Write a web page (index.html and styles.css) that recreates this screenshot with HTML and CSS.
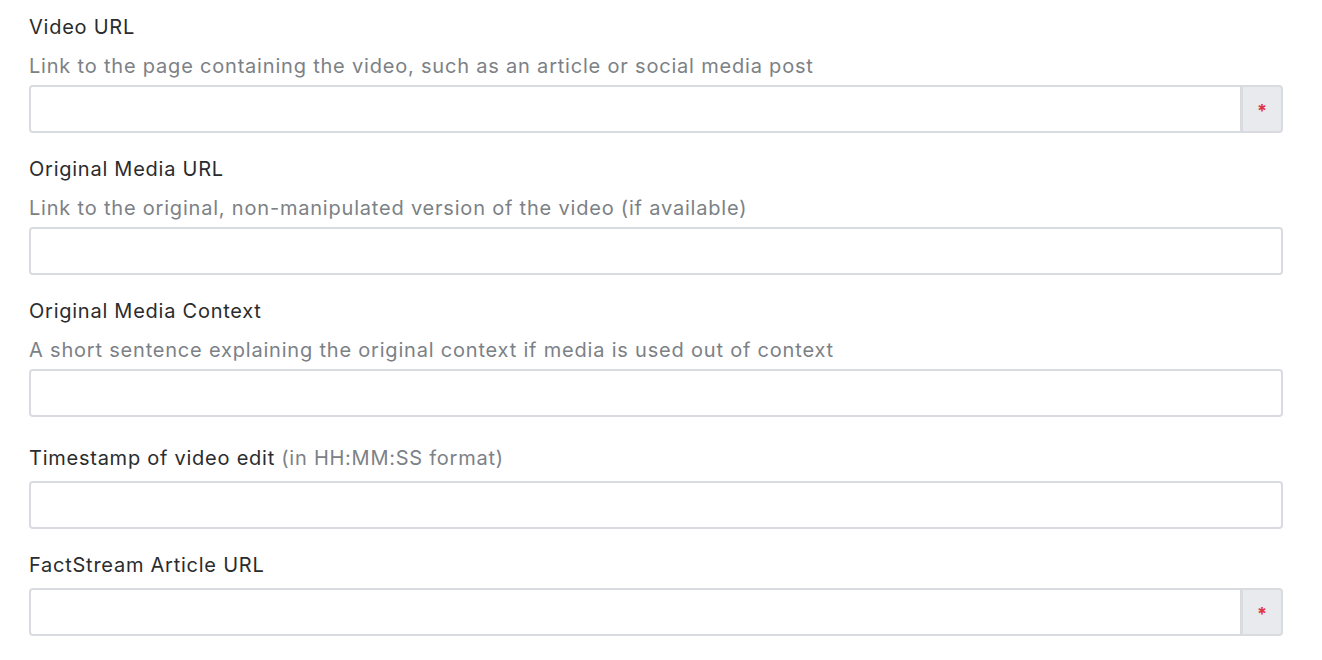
FILE: index.html
```html
<!DOCTYPE html>
<html lang="en">
<head>
    <meta charset="UTF-8">
    <meta name="viewport" content="width=device-width, initial-scale=1.0">
    <title>Video Submission</title>
    <link rel="stylesheet" href="styles.css">
</head>
<body>
    <form class="video-form">
        <div class="field">
            <label for="video-url">Video URL</label>
            <p class="help">Link to the page containing the video, such as an article or social media post</p>
            <div class="input-group">
                <input type="text" id="video-url">
                <span class="addon">*</span>
            </div>
        </div>
        <div class="field">
            <label for="original-url">Original Media URL</label>
            <p class="help">Link to the original, non-manipulated version of the video (if available)</p>
            <div class="input-group">
                <input type="text" id="original-url">
            </div>
        </div>
        <div class="field">
            <label for="original-context">Original Media Context</label>
            <p class="help">A short sentence explaining the original context if media is used out of context</p>
            <div class="input-group">
                <input type="text" id="original-context">
            </div>
        </div>
        <div class="field field-timestamp">
            <label for="timestamp">Timestamp of video edit <span class="hint">(in HH:MM:SS format)</span></label>
            <div class="input-group">
                <input type="text" id="timestamp">
            </div>
        </div>
        <div class="field">
            <label for="article-url">FactStream Article URL</label>
            <div class="input-group">
                <input type="text" id="article-url">
                <span class="addon">*</span>
            </div>
        </div>
    </form>
</body>
</html>
```

FILE: styles.css
```css
body {
    font-family: Inter, "Noto Sans", Arial, sans-serif;
    background-color: #fff;
    color: #2a2c2e;
    margin: 0;
    padding: 0;
}
.video-form {
    padding: 15px 39px 0 29px;
}
.field {
    margin-bottom: 24px;
}
.field-timestamp {
    margin-top: 29px;
}
.field label {
    display: block;
    font-size: 20px;
    line-height: 24px;
    letter-spacing: 0.75px;
    margin-bottom: 11px;
}
.field .hint {
    color: #7c8186;
}
.help {
    font-size: 20px;
    line-height: 24px;
    letter-spacing: 0.8px;
    color: #7c8186;
    margin: 15px 0 7px;
}
.input-group {
    display: flex;
    height: 48px;
}
.input-group input {
    flex: 1;
    min-width: 0;
    height: 100%;
    box-sizing: border-box;
    border: 2px solid #d8dce0;
    border-radius: 4px;
    padding: 0 12px;
    font-size: 18px;
    font-family: inherit;
    background-color: #fff;
}
.input-group input:not(:last-child) {
    border-radius: 4px 0 0 4px;
}
.addon {
    width: 43px;
    box-sizing: border-box;
    display: flex;
    align-items: center;
    justify-content: center;
    background-color: #e9eaee;
    border: 2px solid #d8dce0;
    border-left-width: 3px;
    margin-left: -2px;
    border-radius: 0 4px 4px 0;
    color: #dc3545;
    font-size: 18px;
    font-weight: 700;
    padding-top: 2px;
}
```
